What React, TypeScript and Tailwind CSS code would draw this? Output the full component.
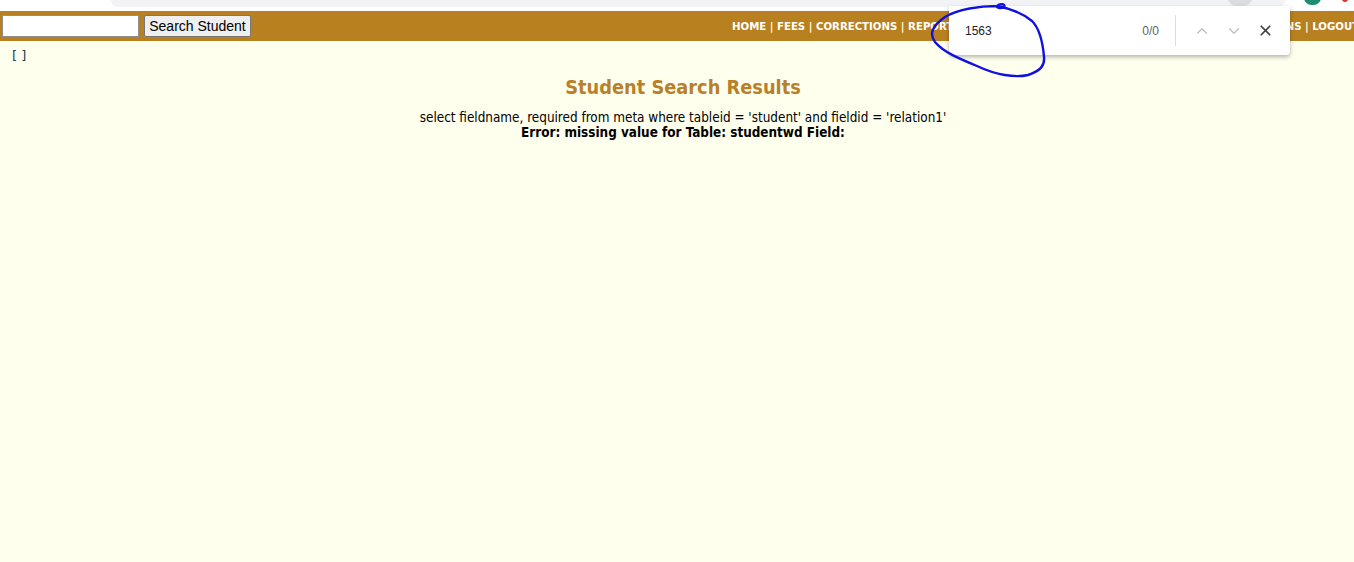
import { ChevronDown, ChevronUp, X } from "lucide-react";

const NAV = [
  "HOME",
  "FEES",
  "CORRECTIONS",
  "REPORTS",
  "ENROLLMENT",
  "ACCOUNTS",
  "SETUP",
  "USERS",
  "ADMISSIONS",
  "LOGOUT",
];

function BrowserStrip() {
  return (
    <div className="relative h-[11px] bg-white overflow-hidden">
      <div className="absolute left-[110px] top-[-10px] w-[1176px] h-[17px] rounded-[9px] bg-[#f1f3f4]" />
      <div className="absolute left-[1227px] top-[-14px] w-[26px] h-[20px] rounded-full bg-[#dadce0]" />
      <div className="absolute left-[1304px] top-[-10px] w-[17px] h-[15px] rounded-full bg-[#1e8e6e]" />
      <div className="absolute left-[1342px] top-[-6px] w-[6px] h-[8px] rounded-full bg-[#d93025]" />
    </div>
  );
}

function FindBar() {
  return (
    <div className="absolute left-[949px] top-[6px] w-[341px] h-[49px] bg-white rounded-b-[4px] shadow-[0_2px_4px_rgba(0,0,0,0.3)] flex items-center font-['Liberation_Sans',Arial,sans-serif] text-[12px]">
      <span className="ml-[16px] text-[#202124]">1563</span>
      <span className="ml-auto text-[#5f6368]">0/0</span>
      <div className="ml-[16px] w-px h-[31px] bg-[#dadce0]" />
      <ChevronUp className="ml-[17px] text-[#bdc1c6]" size={18} strokeWidth={1.8} />
      <ChevronDown className="ml-[14px] text-[#bdc1c6]" size={18} strokeWidth={1.8} />
      <X className="ml-[14px] mr-[16px] text-[#3c4043]" size={17} strokeWidth={2.4} />
    </div>
  );
}

function Scribble() {
  return (
    <svg className="absolute left-0 top-0 pointer-events-none" width="1354" height="90">
      <path
        d="M997 6 C 1000 3, 1006 4, 1004 7 C 1002 9, 996 8, 997 6 C 1008 8, 1022 13, 1032 21 C 1040 29, 1043 45, 1044 57 C 1045 66, 1040 71, 1028 75 C 1015 78, 996 75, 977 66 C 960 59, 943 52, 935 42 C 929 34, 932 26, 945 17 C 958 9, 980 6, 997 6"
        fill="none"
        stroke="#1010e0"
        strokeWidth="2.4"
        strokeLinecap="round"
      />
    </svg>
  );
}

export default function App() {
  return (
    <div className="relative min-h-[562px] bg-[#ffffee] overflow-hidden">
      <BrowserStrip />

      <div className="flex items-center h-[30px] bg-[#b9801f] whitespace-nowrap">
        <input className="shrink-0 ml-[2px] w-[137px] h-[22px] bg-white border border-[#8f8f8f] outline-none" />
        <button className="shrink-0 ml-[5px] w-[107px] h-[22px] bg-[#efefef] border border-[#767676] rounded-[2px] text-[14px] text-black font-['Liberation_Sans',Arial,sans-serif] leading-none">
          Search Student
        </button>
        <div className="shrink-0 ml-[481px] mt-[2px] text-[11.3px] font-bold text-white font-['DejaVu_Sans_Condensed','DejaVu_Sans',sans-serif]">
          {NAV.map((n, i) => (
            <span key={n}>
              {i > 0 && <span className="text-[#ffffdd]"> | </span>}
              {n}
            </span>
          ))}
        </div>
      </div>

      <div className="pl-[12px] pt-[6px] text-[13px] text-[#1a3a5a] font-['DejaVu_Sans',sans-serif] leading-[18px]">
        [ ]
      </div>

      <div className="pl-[12px] text-center font-['DejaVu_Sans_Condensed','DejaVu_Sans',sans-serif]">
        <h1 className="mt-[10px] text-[19.8px] font-bold text-[#b9802a] leading-[26px]">Student Search Results</h1>
        <div className="mt-[9px] text-[13.4px] text-black leading-[15px]">
          select fieldname, required from meta where tableid = 'student' and fieldid = 'relation1'
        </div>
        <div className="text-[13.4px] font-bold text-black leading-[15px]">
          Error: missing value for Table: studentwd Field:
        </div>
      </div>

      <FindBar />
      <Scribble />
    </div>
  );
}
